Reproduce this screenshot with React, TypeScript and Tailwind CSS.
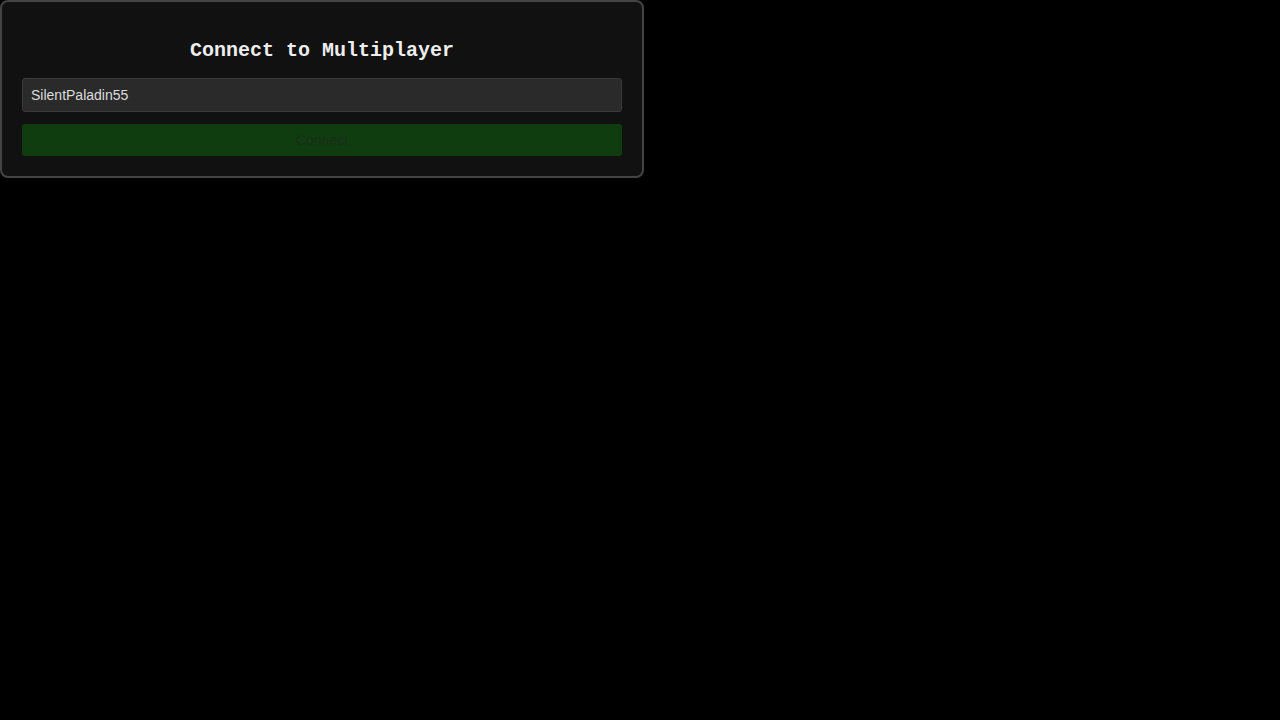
export default function App() {
  return (
    <div className="min-h-screen w-full bg-black">
      <div className="flex w-[644px] flex-col rounded-lg border-2 border-[#444] bg-[#111] p-5">
        <h2 className="mt-[18px] mb-4 text-center font-['Liberation_Mono','Courier_New',monospace] text-[20px] font-bold leading-[22px] text-[#eee]">
          Connect to Multiplayer
        </h2>
        <input
          type="text"
          defaultValue="SilentPaladin55"
          className="block h-[34px] w-full rounded-[3px] border border-[#3a3a3a] bg-[#2a2a2a] px-2 font-['Liberation_Sans',Arial,sans-serif] text-[14px] text-[#ddd] outline-none"
        />
        <button
          disabled
          className="mt-3 block h-8 w-full rounded-[3px] bg-[#0f3d0f] font-['Liberation_Sans',Arial,sans-serif] text-[14px] text-[#1c2c1c]"
        >
          Connect
        </button>
      </div>
    </div>
  );
}
